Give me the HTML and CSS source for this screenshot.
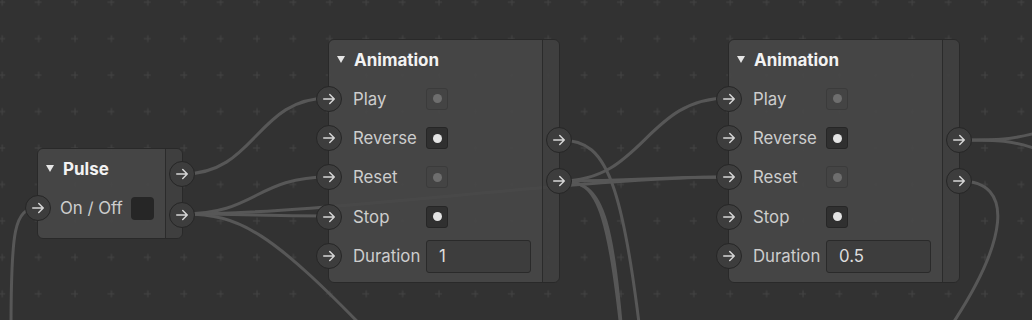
FILE: index.html
```html
<!DOCTYPE html>
<html lang="en">
<head>
    <meta charset="UTF-8">
    <meta name="viewport" content="width=device-width, initial-scale=1.0">
    <title>Node Editor</title>
    <link rel="stylesheet" href="styles.css">
</head>
<body>
    <div class="canvas">
        <svg class="wires" width="1032" height="320">
            <defs>
                <pattern id="grid" x="-16.5" y="-16.5" width="36.4" height="36.45" patternUnits="userSpaceOnUse">
                    <path d="M14.7 18.7h7M18.7 15.2v7" stroke="#444444" stroke-width="1"/>
                </pattern>
            </defs>
            <rect width="1032" height="320" fill="url(#grid)"/>
            <g class="wire">
                <path d="M11 330C11 230 14 208 38 208"/>
                <path d="M183 174C256 174 256 98 329 98"/>
                <path d="M183 214C256 214 256 177 329 177"/>
                <path d="M183 214C256 214 256 216 329 216"/>
                <path d="M183 214C240 214 270 230 380 345"/>
                <path d="M183 214C333 214 579 177 729 177"/>
                <path d="M560 181C645 181 645 177 729 177"/>
                <path d="M560 181C645 181 645 98 729 98"/>
                <path d="M560 181C600 181 610 200 630 420"/>
                <path d="M560 181C605 181 615 210 628 420"/>
                <path d="M560 140C610 140 625 180 650 420"/>
                <path d="M960 140C1000 140 1010 140 1040 132"/>
                <path d="M960 140C1000 140 1010 140 1040 150"/>
                <path d="M960 181C1015 181 1010 240 945 335"/>
            </g>
        </svg>

        <div class="node node-pulse">
            <div class="node-body">
                <div class="node-head"><span class="caret"></span>Pulse</div>
                <div class="row">
                    <span class="port"><svg viewBox="0 0 24 24"><path d="M5 12h14M13 6l6 6-6 6"/></svg></span>
                    <span class="label label-short">On / Off</span>
                    <span class="check check-dark"></span>
                </div>
            </div>
            <div class="node-outs">
                <span class="port"><svg viewBox="0 0 24 24"><path d="M5 12h14M13 6l6 6-6 6"/></svg></span>
                <span class="port"><svg viewBox="0 0 24 24"><path d="M5 12h14M13 6l6 6-6 6"/></svg></span>
            </div>
        </div>

        <div class="node node-anim node-anim-a">
            <div class="node-body">
                <div class="node-head"><span class="caret"></span>Animation</div>
                <div class="row">
                    <span class="port"><svg viewBox="0 0 24 24"><path d="M5 12h14M13 6l6 6-6 6"/></svg></span>
                    <span class="label">Play</span>
                    <span class="check check-off"><i></i></span>
                </div>
                <div class="row">
                    <span class="port"><svg viewBox="0 0 24 24"><path d="M5 12h14M13 6l6 6-6 6"/></svg></span>
                    <span class="label">Reverse</span>
                    <span class="check check-on"><i></i></span>
                </div>
                <div class="row">
                    <span class="port"><svg viewBox="0 0 24 24"><path d="M5 12h14M13 6l6 6-6 6"/></svg></span>
                    <span class="label">Reset</span>
                    <span class="check check-off"><i></i></span>
                </div>
                <div class="row">
                    <span class="port"><svg viewBox="0 0 24 24"><path d="M5 12h14M13 6l6 6-6 6"/></svg></span>
                    <span class="label">Stop</span>
                    <span class="check check-on"><i></i></span>
                </div>
                <div class="row">
                    <span class="port"><svg viewBox="0 0 24 24"><path d="M5 12h14M13 6l6 6-6 6"/></svg></span>
                    <span class="label">Duration</span>
                    <span class="field">1</span>
                </div>
            </div>
            <div class="node-outs">
                <span class="port"><svg viewBox="0 0 24 24"><path d="M5 12h14M13 6l6 6-6 6"/></svg></span>
                <span class="port"><svg viewBox="0 0 24 24"><path d="M5 12h14M13 6l6 6-6 6"/></svg></span>
            </div>
        </div>

        <div class="node node-anim node-anim-b">
            <div class="node-body">
                <div class="node-head"><span class="caret"></span>Animation</div>
                <div class="row">
                    <span class="port"><svg viewBox="0 0 24 24"><path d="M5 12h14M13 6l6 6-6 6"/></svg></span>
                    <span class="label">Play</span>
                    <span class="check check-off"><i></i></span>
                </div>
                <div class="row">
                    <span class="port"><svg viewBox="0 0 24 24"><path d="M5 12h14M13 6l6 6-6 6"/></svg></span>
                    <span class="label">Reverse</span>
                    <span class="check check-on"><i></i></span>
                </div>
                <div class="row">
                    <span class="port"><svg viewBox="0 0 24 24"><path d="M5 12h14M13 6l6 6-6 6"/></svg></span>
                    <span class="label">Reset</span>
                    <span class="check check-off"><i></i></span>
                </div>
                <div class="row">
                    <span class="port"><svg viewBox="0 0 24 24"><path d="M5 12h14M13 6l6 6-6 6"/></svg></span>
                    <span class="label">Stop</span>
                    <span class="check check-on"><i></i></span>
                </div>
                <div class="row">
                    <span class="port"><svg viewBox="0 0 24 24"><path d="M5 12h14M13 6l6 6-6 6"/></svg></span>
                    <span class="label">Duration</span>
                    <span class="field">0.5</span>
                </div>
            </div>
            <div class="node-outs">
                <span class="port"><svg viewBox="0 0 24 24"><path d="M5 12h14M13 6l6 6-6 6"/></svg></span>
                <span class="port"><svg viewBox="0 0 24 24"><path d="M5 12h14M13 6l6 6-6 6"/></svg></span>
            </div>
        </div>
    </div>
</body>
</html>
```

FILE: styles.css
```css
body {
    margin: 0;
    background-color: #323232;
    font-family: Inter, "Noto Sans", sans-serif;
    color: #cfcfcf;
}
.canvas {
    position: relative;
    width: 1032px;
    height: 320px;
    overflow: hidden;
}
.wires {
    position: absolute;
    left: 0;
    top: 0;
}
.wire path {
    fill: none;
    stroke: #575757;
    stroke-width: 3;
}

/* nodes sit on the free canvas */
.node {
    position: absolute;
    box-sizing: border-box;
    display: flex;
    border: 1px solid #292929;
    border-radius: 6px;
    background-color: rgba(71, 71, 71, 0.9);
}
.node-pulse {
    left: 37px;
    top: 148px;
    width: 146px;
    height: 91px;
}
.node-anim {
    top: 39px;
    width: 232px;
    height: 244px;
}
.node-anim-a {
    left: 328px;
}
.node-anim-b {
    left: 728px;
}
.node-body {
    flex: 1;
    display: flex;
    flex-direction: column;
}
.node-head {
    height: 39px;
    display: flex;
    align-items: center;
    gap: 9px;
    padding-left: 8px;
    font-size: 17px;
    font-weight: 700;
    color: #f2f2f2;
}
.caret {
    width: 0;
    height: 0;
    border-left: 4.5px solid transparent;
    border-right: 4.5px solid transparent;
    border-top: 7px solid #e6e6e6;
}
.node-outs {
    width: 16px;
    display: flex;
    flex-direction: column;
    align-items: flex-end;
    gap: 15px;
    padding-top: 87px;
    border-left: 1px solid #2b2b2b;
    border-radius: 0 5px 5px 0;
    background-color: rgba(0, 0, 0, 0.08);
}
.node-pulse .node-outs {
    padding-top: 12px;
}
.node-outs .port {
    margin-right: -13px;
}

.row {
    height: 39.4px;
    display: flex;
    align-items: center;
    font-size: 16.8px;
}
.node-pulse .row {
    height: 40px;
}
.port {
    box-sizing: border-box;
    width: 26px;
    height: 26px;
    flex: none;
    display: flex;
    align-items: center;
    justify-content: center;
    margin-left: -13px;
    border: 1px solid #262626;
    border-radius: 50%;
    background-color: #3d3d3d;
}
.node-outs .port {
    margin-left: 0;
}
.port svg {
    width: 18px;
    height: 18px;
    fill: none;
    stroke: #d6d6d6;
    stroke-width: 2;
    stroke-linecap: round;
    stroke-linejoin: round;
}
.label {
    width: 73px;
    margin-left: 11px;
    color: #cdcdcd;
}
.label-short {
    width: 71px;
    margin-left: 9px;
}
.check {
    box-sizing: border-box;
    width: 22px;
    height: 22px;
    display: flex;
    align-items: center;
    justify-content: center;
    border-radius: 3px;
}
.check i {
    width: 9px;
    height: 9px;
    border-radius: 50%;
}
.check-off {
    border: 1px solid #3b3b3b;
    background-color: #444444;
}
.check-off i {
    background-color: #6e6e6e;
}
.check-on {
    border: 1.5px solid #262626;
    background-color: #303030;
}
.check-on i {
    background-color: #e4e4e4;
}
.check-dark {
    width: 23px;
    height: 23px;
    border-radius: 4px;
    background-color: #262626;
}
.field {
    box-sizing: border-box;
    width: 105px;
    height: 33px;
    display: flex;
    align-items: center;
    padding-left: 12px;
    border: 1.5px solid #2a2a2a;
    border-radius: 3px;
    background-color: #3d3d3d;
    color: #dddddd;
}
```
